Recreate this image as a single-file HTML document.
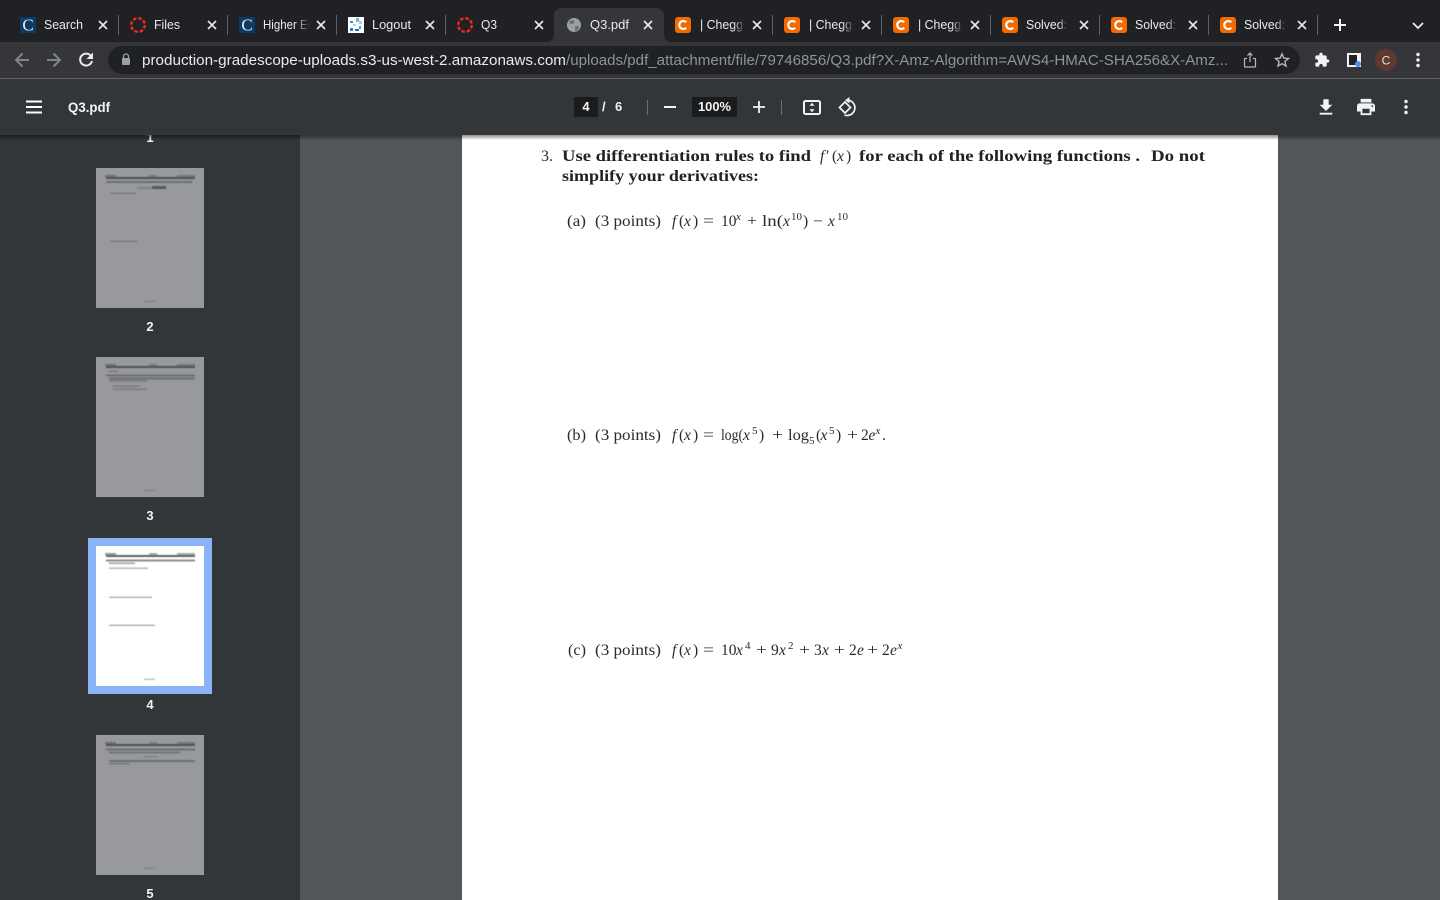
<!DOCTYPE html>
<html lang="en"><head><meta charset="utf-8"><title>Q3.pdf</title>
<style>
html,body{margin:0;padding:0;width:1440px;height:900px;overflow:hidden;background:#525659}
svg{display:block;position:absolute;left:0;top:0}
.t{font:13px "Liberation Sans",sans-serif;fill:#e8eaed}
.u{font:14.5px "Liberation Sans",sans-serif}
.b{font:bold 14px "Liberation Sans",sans-serif;fill:#f1f3f4}
.n{font:bold 13px "Liberation Sans",sans-serif;fill:#f1f3f4}
.m{font:15.5px "Liberation Serif",serif;fill:#2a2a2a}
.mb{font:bold 16px "Liberation Serif",serif;fill:#222}
.i{font-style:italic}
.s{font-size:11px}
.x{stroke:#e8eaed;stroke-width:1.6;fill:none}
</style></head><body>
<svg width="1440" height="900" viewBox="0 0 1440 900" xmlns="http://www.w3.org/2000/svg">
<defs>
<linearGradient id="fade"><stop offset="0" stop-color="#202124" stop-opacity="0"/><stop offset="1" stop-color="#202124"/></linearGradient>
<linearGradient id="sh" x1="0" y1="0" x2="0" y2="1"><stop offset="0" stop-color="#000" stop-opacity=".45"/><stop offset="1" stop-color="#000" stop-opacity="0"/></linearGradient>
<filter id="bl" x="-5%" y="-5%" width="110%" height="110%"><feGaussianBlur stdDeviation=".55"/></filter>
<g id="fc"><rect width="16" height="16" fill="#0c3a60"/><text x="8" y="13.500" text-anchor="middle" font-family="Liberation Serif,serif" font-size="17" fill="#e2ebf1">C</text></g>
<g id="fr"><circle cx="8" cy="8" r="6.800" fill="none" stroke="#f02b1d" stroke-width="2.400" stroke-dasharray="3.500 1.850"/></g>
<g id="fl"><rect width="16" height="16" fill="#fff"/><rect x="8" y="1" width="3" height="4" fill="#6cb9e4"/><rect x="11" y="4" width="3" height="3" fill="#9fd3ee"/><rect x="2" y="4" width="3" height="2" fill="#3d8fce"/><rect x="5" y="7" width="3" height="2" fill="#9fd3ee"/><rect x="2" y="11" width="3" height="3" fill="#2b7fc4"/><rect x="7" y="12" width="4" height="2" fill="#1f74bd"/><rect x="11" y="9" width="2" height="3" fill="#4a9fd8"/></g>
<g id="fg"><rect width="16" height="16" rx="3" fill="#f46a00"/><path d="M11.200 5.300A4 4 0 1 0 11.200 10.700" fill="none" stroke="#fff" stroke-width="2.200"/></g>
<path id="cx" class="x" d="M-4-4L4 4M4-4L-4 4"/>
</defs>

<!-- main area -->
<rect y="79" width="1440" height="821" fill="#525659"/>
<rect x="462" y="130" width="816" height="770" fill="#fff"/>

<!-- sidebar -->
<rect y="79" width="300" height="821" fill="#323639"/>
<text x="150" y="142" class="n" text-anchor="middle">1</text>

<rect x="96" y="168" width="108" height="140" fill="#97999c"/>
<rect x="96" y="357" width="108" height="140" fill="#97999c"/>
<rect x="88" y="538" width="124" height="156" fill="#8ab4f8"/>
<rect x="96" y="546" width="108" height="140" fill="#fff"/>
<rect x="96" y="735" width="108" height="140" fill="#97999c"/>

<g filter="url(#bl)">
<rect x="105" y="175" width="11" height="2" fill="#6f7173"/><rect x="149" y="175" width="8" height="2" fill="#76787a"/><rect x="177" y="175" width="18" height="2" fill="#76787a"/>
<rect x="106" y="177" width="89" height="2" fill="#4f5153"/>
<rect x="106" y="181" width="86" height="2" fill="#6c6e70"/>
<rect x="137" y="187" width="15" height="2" fill="#808284"/><rect x="152" y="186" width="14" height="3" fill="#57595b"/>
<rect x="110" y="192.500" width="26" height="1.500" fill="#7a7c7e"/>
<rect x="110" y="240.500" width="27" height="1.500" fill="#7a7c7e"/>
<rect x="144" y="300.500" width="11" height="1.500" fill="#808284"/>

<rect x="105" y="364" width="11" height="2" fill="#6f7173"/><rect x="149" y="364" width="8" height="2" fill="#76787a"/><rect x="177" y="364" width="18" height="2" fill="#76787a"/>
<rect x="106" y="366" width="89" height="2" fill="#4f5153"/>
<rect x="109" y="370.500" width="9" height="1.500" fill="#7a7c7e"/>
<rect x="106" y="374.500" width="89" height="2" fill="#6c6e70"/>
<rect x="109" y="377.500" width="86" height="2" fill="#6c6e70"/>
<rect x="109" y="380" width="38" height="1.500" fill="#74767a"/>
<rect x="112" y="385.500" width="28" height="1.500" fill="#7a7c7e"/>
<rect x="113" y="388.500" width="34" height="1.500" fill="#7a7c7e"/>
<rect x="144" y="489.500" width="11" height="1.500" fill="#808284"/>

<rect x="105" y="553" width="11" height="2" fill="#9a9a9a"/><rect x="149" y="553" width="8" height="2" fill="#a8a8a8"/><rect x="177" y="553" width="18" height="2" fill="#a8a8a8"/>
<rect x="106" y="555" width="89" height="2" fill="#606060"/>
<rect x="106" y="559.500" width="89" height="2" fill="#8c8c8c"/>
<rect x="109" y="562.500" width="26" height="1.500" fill="#a0a0a0"/>
<rect x="109" y="567.500" width="39" height="1.500" fill="#b4b4b4"/>
<rect x="109" y="596.500" width="43" height="1.500" fill="#b4b4b4"/>
<rect x="109" y="624.500" width="46" height="1.500" fill="#b4b4b4"/>
<rect x="144" y="678.500" width="11" height="1.500" fill="#c0c0c0"/>

<rect x="105" y="742" width="11" height="2" fill="#6f7173"/><rect x="149" y="742" width="8" height="2" fill="#76787a"/><rect x="177" y="742" width="18" height="2" fill="#76787a"/>
<rect x="106" y="744" width="89" height="2" fill="#4f5153"/>
<rect x="106" y="748.500" width="89" height="2" fill="#6c6e70"/>
<rect x="109" y="751.500" width="71" height="2" fill="#74767a"/>
<rect x="144" y="756" width="14" height="1.500" fill="#808284"/>
<rect x="109" y="760" width="86" height="2" fill="#6c6e70"/>
<rect x="109" y="763" width="21" height="1.500" fill="#74767a"/>
<rect x="144" y="867.500" width="11" height="1.500" fill="#808284"/>
</g>

<text x="150" y="331" class="n" text-anchor="middle">2</text>
<text x="150" y="520" class="n" text-anchor="middle">3</text>
<text x="150" y="709" class="n" text-anchor="middle">4</text>
<text x="150" y="898" class="n" text-anchor="middle">5</text>

<!-- document text -->
<text x="541" y="161" class="m" textLength="12" lengthAdjust="spacingAndGlyphs">3.</text>
<text x="562" y="161" class="mb" textLength="249" lengthAdjust="spacingAndGlyphs">Use differentiation rules to find</text>
<text x="820" y="161" class="m i">f</text>
<text x="826" y="161" class="m">′</text>
<text x="832" y="161" class="m">(</text>
<text x="837" y="161" class="m i">x</text>
<text x="846" y="161" class="m">)</text>
<text x="859" y="161" class="mb" textLength="281" lengthAdjust="spacingAndGlyphs">for each of the following functions .</text>
<text x="1151" y="161" class="mb" textLength="54" lengthAdjust="spacingAndGlyphs">Do not</text>
<text x="562" y="181" class="mb" textLength="197" lengthAdjust="spacingAndGlyphs">simplify your derivatives:</text>

<!-- (a) -->
<text x="567" y="226" class="m" textLength="19" lengthAdjust="spacingAndGlyphs">(a)</text>
<text x="595" y="226" class="m" textLength="66" lengthAdjust="spacingAndGlyphs">(3 points)</text>
<text x="672" y="226" class="m i">f</text>
<text x="679" y="226" class="m">(</text>
<text x="684" y="226" class="m i">x</text>
<text x="693" y="226" class="m">)</text>
<text x="703" y="226" class="m" textLength="11" lengthAdjust="spacingAndGlyphs">=</text>
<text x="721" y="226" class="m">10</text>
<text x="736" y="220" class="m i s">x</text>
<text x="747" y="226" class="m" textLength="10" lengthAdjust="spacingAndGlyphs">+</text>
<text x="762" y="226" class="m" textLength="21" lengthAdjust="spacingAndGlyphs">ln(</text>
<text x="783" y="226" class="m i">x</text>
<text x="791" y="220" class="m s" textLength="11" lengthAdjust="spacingAndGlyphs">10</text>
<text x="803" y="226" class="m">)</text>
<text x="813" y="226" class="m" textLength="10" lengthAdjust="spacingAndGlyphs">−</text>
<text x="828" y="226" class="m i">x</text>
<text x="837" y="220" class="m s" textLength="11" lengthAdjust="spacingAndGlyphs">10</text>

<!-- (b) -->
<text x="567" y="440" class="m" textLength="19" lengthAdjust="spacingAndGlyphs">(b)</text>
<text x="595" y="440" class="m" textLength="66" lengthAdjust="spacingAndGlyphs">(3 points)</text>
<text x="672" y="440" class="m i">f</text>
<text x="679" y="440" class="m">(</text>
<text x="684" y="440" class="m i">x</text>
<text x="693" y="440" class="m">)</text>
<text x="703" y="440" class="m" textLength="11" lengthAdjust="spacingAndGlyphs">=</text>
<text x="721" y="440" class="m" textLength="22" lengthAdjust="spacingAndGlyphs">log(</text>
<text x="743" y="440" class="m i">x</text>
<text x="752" y="434" class="m s">5</text>
<text x="759" y="440" class="m">)</text>
<text x="772" y="440" class="m" textLength="11" lengthAdjust="spacingAndGlyphs">+</text>
<text x="788" y="440" class="m" textLength="21" lengthAdjust="spacingAndGlyphs">log</text>
<text x="809" y="444" class="m s">5</text>
<text x="816" y="440" class="m">(</text>
<text x="820.500" y="440" class="m i">x</text>
<text x="829" y="434" class="m s">5</text>
<text x="836" y="440" class="m">)</text>
<text x="847" y="440" class="m" textLength="11" lengthAdjust="spacingAndGlyphs">+</text>
<text x="861" y="440" class="m">2</text>
<text x="868.500" y="440" class="m i">e</text>
<text x="875.500" y="434" class="m i s">x</text>
<text x="882" y="440" class="m">.</text>

<!-- (c) -->
<text x="568" y="655" class="m" textLength="18" lengthAdjust="spacingAndGlyphs">(c)</text>
<text x="595" y="655" class="m" textLength="66" lengthAdjust="spacingAndGlyphs">(3 points)</text>
<text x="672" y="655" class="m i">f</text>
<text x="679" y="655" class="m">(</text>
<text x="684" y="655" class="m i">x</text>
<text x="693" y="655" class="m">)</text>
<text x="703" y="655" class="m" textLength="11" lengthAdjust="spacingAndGlyphs">=</text>
<text x="721" y="655" class="m">10</text>
<text x="736" y="655" class="m i">x</text>
<text x="745" y="649" class="m s">4</text>
<text x="756" y="655" class="m" textLength="11" lengthAdjust="spacingAndGlyphs">+</text>
<text x="771" y="655" class="m">9</text>
<text x="779" y="655" class="m i">x</text>
<text x="788" y="649" class="m s">2</text>
<text x="799" y="655" class="m" textLength="11" lengthAdjust="spacingAndGlyphs">+</text>
<text x="814" y="655" class="m">3</text>
<text x="822" y="655" class="m i">x</text>
<text x="834" y="655" class="m" textLength="11" lengthAdjust="spacingAndGlyphs">+</text>
<text x="849" y="655" class="m">2</text>
<text x="857" y="655" class="m i">e</text>
<text x="867" y="655" class="m" textLength="11" lengthAdjust="spacingAndGlyphs">+</text>
<text x="882" y="655" class="m">2</text>
<text x="890" y="655" class="m i">e</text>
<text x="897.500" y="649" class="m i s">x</text>

<!-- shadow + pdf toolbar -->
<rect y="135" width="1440" height="5" fill="url(#sh)"/>
<rect y="79" width="1440" height="56" fill="#323639"/>
<path d="M26 101.500h16M26 107h16M26 112.500h16" stroke="#fff" stroke-width="2"/>
<text x="68" y="112" class="b" textLength="42" lengthAdjust="spacingAndGlyphs">Q3.pdf</text>
<rect x="574" y="97" width="24" height="20" fill="#191b1c"/>
<text x="586" y="111" class="n" text-anchor="middle">4</text>
<text x="602" y="111" class="n">/</text>
<text x="615" y="111" class="n">6</text>
<rect x="647" y="100" width="1" height="15" fill="#6b6e71"/>
<rect x="664" y="106" width="12" height="2" fill="#f1f3f4"/>
<rect x="692" y="97" width="45" height="20" fill="#191b1c"/>
<text x="698" y="111" class="n" textLength="33" lengthAdjust="spacingAndGlyphs">100%</text>
<path d="M753 107h12M759 101v12" stroke="#f1f3f4" stroke-width="1.800"/>
<rect x="781" y="100" width="1" height="15" fill="#6b6e71"/>
<rect x="804" y="101" width="16" height="13" rx="1.500" fill="none" stroke="#f1f3f4" stroke-width="2"/>
<path d="M812 102.800l2.500 3h-5zM812 112.200l2.500-3h-5z" fill="#f1f3f4"/>
<path d="M839.500 107.500l5.500-5.500 5.500 5.500-5.500 5.500z" fill="none" stroke="#f1f3f4" stroke-width="1.700"/>
<path d="M849 100.300A7.700 7.700 0 1 1 844.500 115" fill="none" stroke="#f1f3f4" stroke-width="1.700"/>
<path d="M849.500 97v6.500l-4.500-3.200z" fill="#f1f3f4"/>
<path transform="translate(1315.200 96.600) scale(.9)" fill="#f1f3f4" d="M19 9h-4V3H9v6H5l7 7 7-7zM5 18v2h14v-2H5z"/>
<path transform="translate(1355.200 96.200) scale(.9)" fill="#f1f3f4" d="M19 8H5c-1.660 0-3 1.340-3 3v6h4v4h12v-4h4v-6c0-1.660-1.340-3-3-3zm-3 11H8v-5h8v5zm3-7c-.55 0-1-.45-1-1s.45-1 1-1 1 .45 1 1-.45 1-1 1zm-1-9H6v4h12V3z"/>
<circle cx="1406" cy="101.500" r="1.700" fill="#f1f3f4"/><circle cx="1406" cy="107" r="1.700" fill="#f1f3f4"/><circle cx="1406" cy="112.500" r="1.700" fill="#f1f3f4"/>

<!-- chrome toolbar -->
<rect y="42" width="1440" height="36" fill="#35363a"/>
<rect y="78" width="1440" height="1" fill="#636467"/>
<!-- tab strip -->
<rect width="1440" height="42" fill="#202124"/>
<path d="M546 42c5 0 8-3 8-8V16c0-5 3-8 8-8h94c5 0 8 3 8 8v18c0 5 3 8 8 8z" fill="#35363a"/>

<g fill="#5f6063">
<rect x="118" y="15" width="1" height="20"/><rect x="227" y="15" width="1" height="20"/><rect x="336" y="15" width="1" height="20"/><rect x="445" y="15" width="1" height="20"/>
<rect x="772" y="15" width="1" height="20"/><rect x="881" y="15" width="1" height="20"/><rect x="990" y="15" width="1" height="20"/><rect x="1099" y="15" width="1" height="20"/><rect x="1208" y="15" width="1" height="20"/><rect x="1317" y="15" width="1" height="20"/>
</g>

<use href="#fc" x="20" y="17"/><use href="#fr" x="130" y="17"/><use href="#fc" x="239" y="17"/><use href="#fl" x="348" y="17"/><use href="#fr" x="457" y="17"/>
<circle cx="574" cy="25" r="7" fill="#9aa0a6"/><path d="M569 21l4-1 2 2-2 2-3 0zM575 26l4 0-1 4-3 1z" fill="#6d7176"/>
<use href="#fg" x="675" y="17"/><use href="#fg" x="784" y="17"/><use href="#fg" x="893" y="17"/><use href="#fg" x="1002" y="17"/><use href="#fg" x="1111" y="17"/><use href="#fg" x="1220" y="17"/>

<text x="44" y="29" class="t" textLength="39" lengthAdjust="spacingAndGlyphs">Search</text>
<text x="154" y="29" class="t" textLength="26" lengthAdjust="spacingAndGlyphs">Files</text>
<text x="263" y="29" class="t" textLength="51" lengthAdjust="spacingAndGlyphs">Higher Ed</text>
<text x="372" y="29" class="t" textLength="39" lengthAdjust="spacingAndGlyphs">Logout</text>
<text x="481" y="29" class="t" textLength="16" lengthAdjust="spacingAndGlyphs">Q3</text>
<text x="590" y="29" class="t" textLength="39" lengthAdjust="spacingAndGlyphs">Q3.pdf</text>
<text x="700" y="29" class="t" textLength="43" lengthAdjust="spacingAndGlyphs">| Chegg</text>
<text x="809" y="29" class="t" textLength="43" lengthAdjust="spacingAndGlyphs">| Chegg</text>
<text x="918" y="29" class="t" textLength="43" lengthAdjust="spacingAndGlyphs">| Chegg</text>
<text x="1026" y="29" class="t" textLength="41" lengthAdjust="spacingAndGlyphs">Solved:</text>
<text x="1135" y="29" class="t" textLength="41" lengthAdjust="spacingAndGlyphs">Solved:</text>
<text x="1244" y="29" class="t" textLength="41" lengthAdjust="spacingAndGlyphs">Solved:</text>

<rect x="296" y="14" width="14" height="22" fill="url(#fade)"/><rect x="310" y="14" width="6" height="22" fill="#202124"/>
<rect x="733" y="14" width="12" height="22" fill="url(#fade)"/>
<rect x="842" y="14" width="12" height="22" fill="url(#fade)"/>
<rect x="951" y="14" width="12" height="22" fill="url(#fade)"/>
<rect x="1058" y="14" width="11" height="22" fill="url(#fade)"/>
<rect x="1167" y="14" width="11" height="22" fill="url(#fade)"/>
<rect x="1276" y="14" width="11" height="22" fill="url(#fade)"/>

<use href="#cx" x="103" y="25"/><use href="#cx" x="212" y="25"/><use href="#cx" x="321" y="25"/><use href="#cx" x="430" y="25"/><use href="#cx" x="539" y="25"/><use href="#cx" x="648" y="25"/><use href="#cx" x="757" y="25"/><use href="#cx" x="866" y="25"/><use href="#cx" x="975" y="25"/><use href="#cx" x="1084" y="25"/><use href="#cx" x="1193" y="25"/><use href="#cx" x="1302" y="25"/>
<path d="M1334 25h12M1340 19v12" stroke="#f1f3f4" stroke-width="2"/>
<path d="M1413 23l5 5 5-5" fill="none" stroke="#e8eaed" stroke-width="1.800"/>

<!-- nav icons -->
<path d="M29 60H16.500M22.500 53.500L16 60l6.500 6.500" fill="none" stroke="#808387" stroke-width="2"/>
<path d="M47 60h12.500M53.500 53.500L60 60l-6.500 6.500" fill="none" stroke="#808387" stroke-width="2"/>
<path d="M91 56a6 6 0 1 0 1 5" fill="none" stroke="#e8eaed" stroke-width="2"/><path d="M93 52.500v6.500h-6.500z" fill="#e8eaed"/>

<!-- omnibox -->
<rect x="108" y="46" width="1192" height="28" rx="14" fill="#202124"/>
<rect x="122" y="58" width="8" height="7" rx="1" fill="#9aa0a6"/><path d="M123.500 58v-1.500a2.500 2.500 0 0 1 5 0V58" fill="none" stroke="#9aa0a6" stroke-width="1.300"/>
<text x="142" y="65" class="u" fill="#e8eaed" textLength="424" lengthAdjust="spacingAndGlyphs">production-gradescope-uploads.s3-us-west-2.amazonaws.com</text>
<text x="566" y="65" class="u" fill="#8f9499" textLength="662" lengthAdjust="spacingAndGlyphs">/uploads/pdf_attachment/file/79746856/Q3.pdf?X-Amz-Algorithm=AWS4-HMAC-SHA256&amp;X-Amz...</text>
<path d="M1247 58.500h-1.700a.8.8 0 0 0-.8.8v6.900a.8.8 0 0 0 .8.8h9.400a.8.8 0 0 0 .8-.8v-6.900a.8.8 0 0 0-.8-.8H1253M1250 62v-8.500M1247.500 55.500l2.500-2.500 2.500 2.500" fill="none" stroke="#b4b7ba" stroke-width="1.200"/>
<path d="M1282 53.800l1.800 4.300 4.700.4-3.600 3 1.100 4.600-4-2.400-4 2.400 1.100-4.600-3.600-3 4.700-.4z" fill="none" stroke="#b4b7ba" stroke-width="1.400"/>

<path transform="translate(1314 52) scale(.667)" fill="#f1f3f4" d="M20.500 11H19V7c0-1.100-.9-2-2-2h-4V3.500C13 2.120 11.880 1 10.500 1S8 2.120 8 3.500V5H4c-1.100 0-1.990.9-1.990 2v3.800H3.500c1.490 0 2.700 1.210 2.700 2.700s-1.210 2.700-2.700 2.700H2V20c0 1.100.9 2 2 2h3.800v-1.500c0-1.490 1.210-2.700 2.700-2.700 1.490 0 2.700 1.210 2.700 2.700V22H17c1.100 0 2-.9 2-2v-4h1.500c1.380 0 2.500-1.120 2.500-2.500S21.880 11 20.500 11z"/>
<rect x="1347" y="53" width="14" height="14" fill="#f1f3f4"/><rect x="1349" y="55" width="8" height="10" fill="#202124"/>
<circle cx="1358" cy="64" r="3" fill="#4d8ef0"/>
<circle cx="1386" cy="60" r="11" fill="#5e3a2e"/>
<text x="1386" y="64.500" font-family="Liberation Sans,sans-serif" font-size="12" fill="#e8e0dc" text-anchor="middle">C</text>
<circle cx="1418" cy="54.500" r="1.700" fill="#f1f3f4"/><circle cx="1418" cy="60" r="1.700" fill="#f1f3f4"/><circle cx="1418" cy="65.500" r="1.700" fill="#f1f3f4"/>
</svg>
</body></html>
